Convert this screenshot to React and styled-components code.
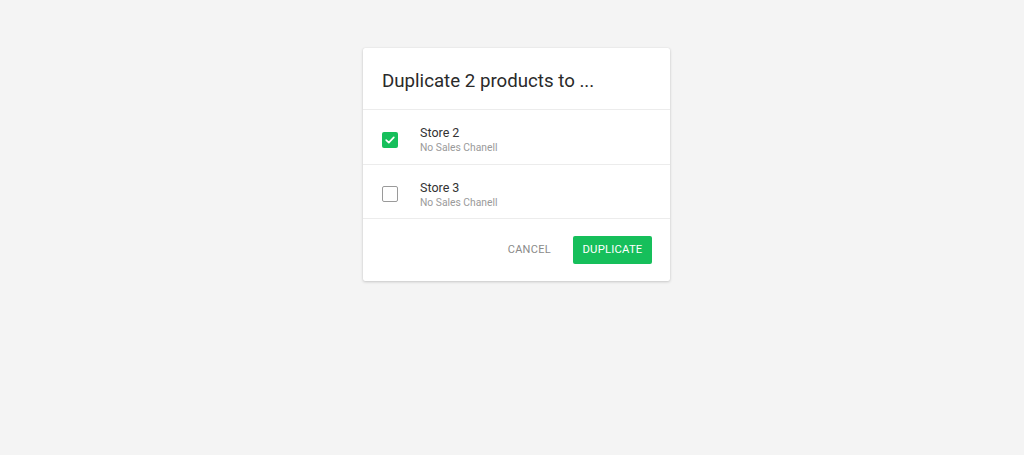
import React from "react";
import styled, { createGlobalStyle } from "styled-components";

const Global = createGlobalStyle`
  html, body { margin: 0; padding: 0; background: #f4f4f4; }
  body { font-family: Roboto, "Liberation Sans", sans-serif; }
`;

const Page = styled.div`
  width: 1024px;
  height: 455px;
  padding-top: 48px;
  padding-left: 363px;
  box-sizing: border-box;
`;

const Dialog = styled.div`
  width: 307px;
  background: #fff;
  border-radius: 2px;
  box-shadow: 0 1px 3px rgba(0,0,0,0.18), 0 0 1px rgba(0,0,0,0.12);
`;

const Header = styled.div`
  height: 62px;
  box-sizing: border-box;
  padding: 21px 19px 0;
  border-bottom: 1px solid #ececec;
`;

const Title = styled.h2`
  margin: 0;
  font-size: 18.7px;
  font-weight: 400;
  color: #2a2a2a;
  line-height: 24px;
`;

const Row = styled.div`
  display: flex;
  align-items: center;
  height: ${p => p.$h}px;
  box-sizing: border-box;
  padding-left: 19px;
  padding-top: 5px;
  border-bottom: 1px solid #ececec;
`;

const Box = styled.span`
  width: 16px;
  height: 16px;
  box-sizing: border-box;
  border-radius: 2px;
  display: flex;
  align-items: center;
  justify-content: center;
  margin-right: 22px;
  background: ${p => (p.$checked ? "#16bf5b" : "#fff")};
  border: ${p => (p.$checked ? "none" : "1.5px solid #9a9a9a")};
`;

const Texts = styled.div`
  display: flex;
  flex-direction: column;
`;

const Name = styled.div`
  font-size: 12.5px;
  color: #333;
  line-height: 17px;
`;

const Sub = styled.div`
  font-size: 10.3px;
  color: #9a9a9a;
  line-height: 14px;
`;

const Footer = styled.div`
  display: flex;
  justify-content: flex-end;
  align-items: center;
  gap: 22px;
  height: 62px;
  padding-right: 18px;
  padding-bottom: 1px;
  box-sizing: border-box;
`;

const TextButton = styled.button`
  background: none;
  border: none;
  font-family: inherit;
  font-size: 11px;
  letter-spacing: 0.3px;
  color: #8a8a8a;
  padding: 0;
  cursor: pointer;
`;

const PrimaryButton = styled.button`
  width: 79px;
  height: 28px;
  border: none;
  border-radius: 2px;
  background: #16bf5b;
  color: #fff;
  font-family: inherit;
  font-size: 11.3px;
  letter-spacing: 0.2px;
  font-weight: 400;
  cursor: pointer;
`;

const stores = [
  { name: "Store 2", checked: true, h: 55 },
  { name: "Store 3", checked: false, h: 54 },
];

export default function App() {
  return (
    <Page>
      <Global />
      <Dialog>
        <Header>
          <Title>Duplicate 2 products to ...</Title>
        </Header>
        {stores.map(s => (
          <Row key={s.name} $h={s.h}>
            <Box $checked={s.checked}>
              {s.checked && (
                <svg width="12" height="12" viewBox="0 0 12 12">
                  <path d="M2.2 6.2 L4.8 8.6 L9.8 3.4" fill="none" stroke="#fff" strokeWidth="1.7" strokeLinecap="round" strokeLinejoin="round" />
                </svg>
              )}
            </Box>
            <Texts>
              <Name>{s.name}</Name>
              <Sub>No Sales Chanell</Sub>
            </Texts>
          </Row>
        ))}
        <Footer>
          <TextButton>CANCEL</TextButton>
          <PrimaryButton>DUPLICATE</PrimaryButton>
        </Footer>
      </Dialog>
    </Page>
  );
}
